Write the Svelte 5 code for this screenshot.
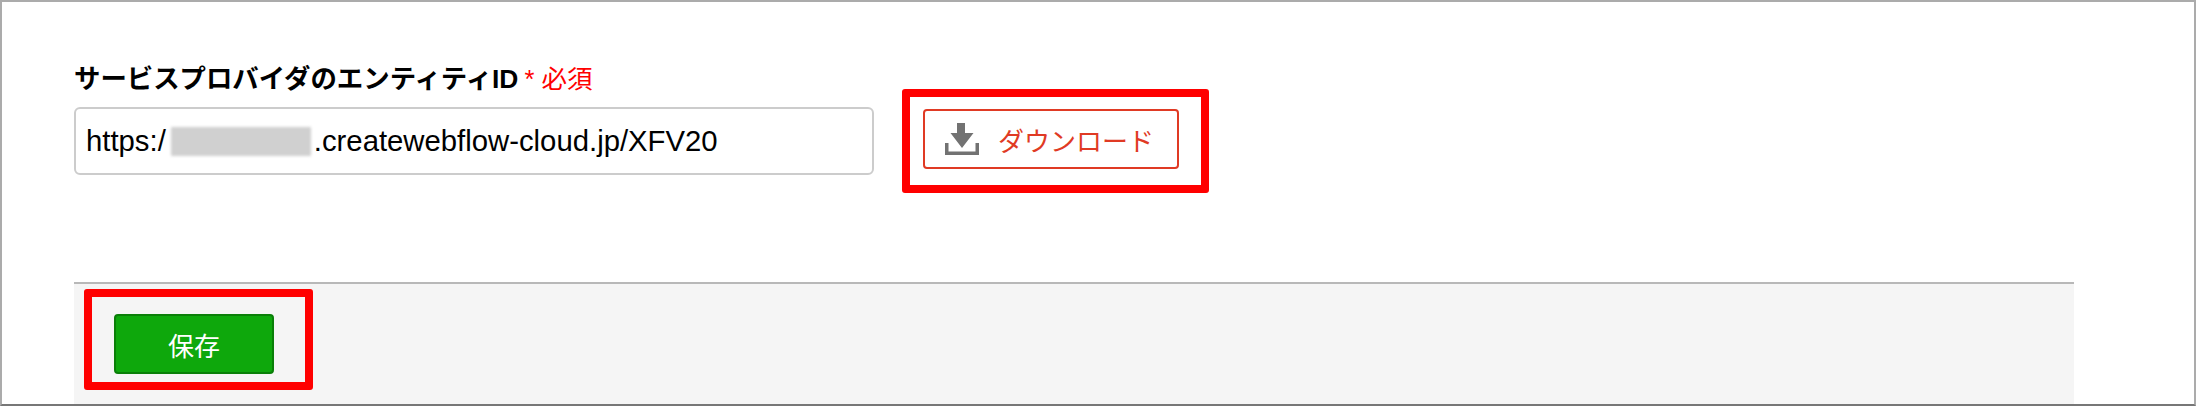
<script>
  let entityHost = '.createwebflow-cloud.jp/XFV20';
</script>

<div class="frame">
  <section class="form">
    <div class="label-row">
      <span class="label">サービスプロバイダのエンティティID</span>
      <span class="required">* 必須</span>
    </div>
    <div class="field-row">
      <div class="input">
        <span>https:/</span><span class="blur"></span><span>{entityHost}</span>
      </div>
      <div class="marked download-wrap">
        <button class="download">
          <svg width="34" height="34" viewBox="0 0 34 34" aria-hidden="true">
            <path d="M12 1h8v10h8.500L17 26 5.500 11H12z" fill="#727272" />
            <path d="M1.750 21v10.250h30.500V21" fill="none" stroke="#727272" stroke-width="3.500" />
          </svg>
          <span>ダウンロード</span>
        </button>
        <i class="callout"></i>
      </div>
    </div>
  </section>
  <footer class="actions">
    <div class="marked save-wrap">
      <button class="save">保存</button>
      <i class="callout"></i>
    </div>
  </footer>
</div>

<style>
  :global(body) {
    background: #fff;
  }

  .frame {
    box-sizing: border-box;
    width: 2196px;
    height: 406px;
    border: 2px solid #ababab;
    border-bottom-color: #777;
    background: #fff;
    font-family: "Liberation Sans", "Noto Sans CJK JP", sans-serif;
    display: flex;
    flex-direction: column;
  }

  .form {
    height: 280px;
    box-sizing: border-box;
    padding: 61px 0 0 72px;
  }

  .label-row {
    display: flex;
    align-items: center;
    gap: 6px;
    height: 32px;
    line-height: 32px;
  }

  .label {
    font-size: 26.4px;
    font-weight: 700;
    color: #000;
  }

  .required {
    color: #f00;
    font-size: 25.5px;
  }

  .field-row {
    display: flex;
    align-items: flex-start;
    margin-top: 12px;
  }

  .input {
    box-sizing: border-box;
    width: 800px;
    height: 68px;
    border: 2px solid #ccc;
    border-radius: 6px;
    padding: 0 10px;
    display: flex;
    align-items: center;
    font-size: 29.3px;
    color: #000;
    white-space: nowrap;
  }

  .blur {
    width: 140px;
    height: 29px;
    margin: 0 3px 0 5px;
    background: #d0d0d0;
    filter: blur(1.5px);
  }

  .marked {
    position: relative;
  }

  .download-wrap {
    margin: 2px 0 0 49px;
  }

  .download {
    box-sizing: border-box;
    width: 256px;
    height: 60px;
    border: 2px solid #e03a24;
    border-radius: 4px;
    background: #fff;
    color: #e03a24;
    font: inherit;
    font-size: 26px;
    padding: 0 0 0 20px;
    display: flex;
    align-items: center;
    gap: 19px;
  }

  .callout {
    position: absolute;
    border: 8px solid #f00;
    border-radius: 3px;
    pointer-events: none;
  }

  .download-wrap .callout {
    top: -20px;
    left: -21px;
    right: -30px;
    bottom: -24px;
  }

  .actions {
    box-sizing: border-box;
    width: 2000px;
    height: 122px;
    margin-left: 72px;
    border-top: 2px solid #b8b8b8;
    background: #f5f5f5;
    padding: 30px 0 0 40px;
  }

  .save-wrap {
    width: 160px;
  }

  .save {
    box-sizing: border-box;
    display: block;
    width: 160px;
    height: 60px;
    border: 2px solid #0a7f08;
    border-radius: 4px;
    background: #0ea80c;
    color: #fff;
    font: inherit;
    font-size: 26px;
  }

  .save-wrap .callout {
    top: -25px;
    left: -30px;
    right: -39px;
    bottom: -16px;
  }
</style>
